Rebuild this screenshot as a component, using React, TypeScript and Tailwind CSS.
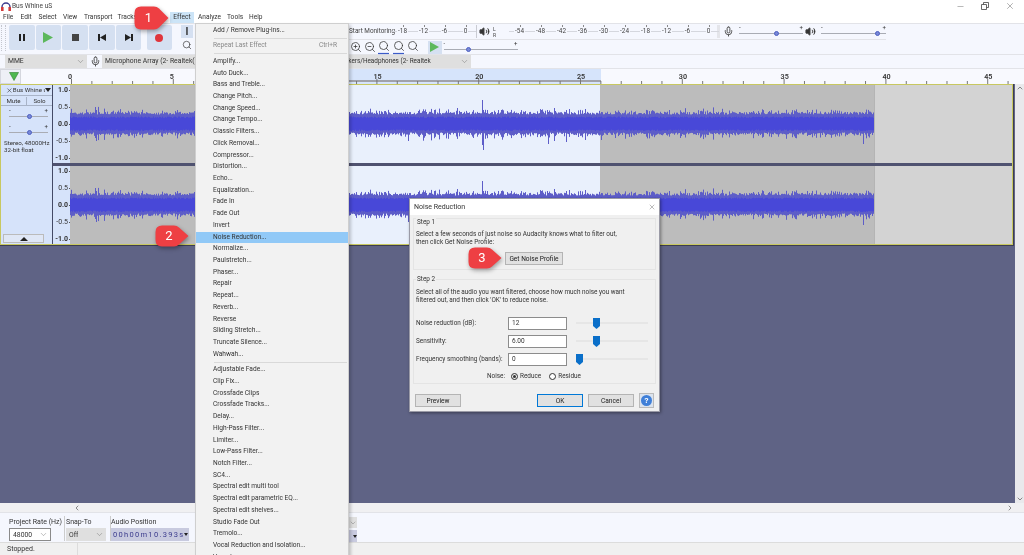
import React from "react";
import { Mic, Volume2, ZoomIn, ZoomOut, Search, Minus, X, ChevronDown, ChevronUp, ChevronLeft, ChevronRight } from "lucide-react";

const MENU: (string | null | { t: string; s: string })[] = [
  "Add / Remove Plug-ins...", null, { t: "Repeat Last Effect", s: "Ctrl+R" }, null,
  "Amplify...", "Auto Duck...", "Bass and Treble...", "Change Pitch...", "Change Speed...", "Change Tempo...", "Classic Filters...", "Click Removal...", "Compressor...", "Distortion...", "Echo...", "Equalization...", "Fade In", "Fade Out", "Invert", "Noise Reduction...", "Normalize...", "Paulstretch...", "Phaser...", "Repair", "Repeat...", "Reverb...", "Reverse", "Sliding Stretch...", "Truncate Silence...", "Wahwah...", null,
  "Adjustable Fade...", "Clip Fix...", "Crossfade Clips", "Crossfade Tracks...", "Delay...", "High-Pass Filter...", "Limiter...", "Low-Pass Filter...", "Notch Filter...", "SC4...", "Spectral edit multi tool", "Spectral edit parametric EQ...", "Spectral edit shelves...", "Studio Fade Out", "Tremolo...", "Vocal Reduction and Isolation...", "Vocoder...",
];

function wavePaths(w: number, c: number) {
  let s = 1234567;
  const r = () => { s = (s * 16807) % 2147483647; return s / 2147483647; };
  let outer = ""; let inner = "";
  const spikes: Record<number, [number, number]> = { 25: [17, 14], 26: [14, 17], 338: [10, 17], 412: [24, 21], 413: [14, 26], 478: [12, 20], 484: [16, 17], 496: [14, 18], 531: [12, 16], 737: [14, 12], 793: [11, 20] };
  for (let x = 0; x < w; x += 1) {
    const k = r();
    const big = k > 0.94 ? 6 * r() : k > 0.65 ? 3.5 * r() : 0;
    const up = spikes[x]?.[0] ?? 9.5 + r() * 2.5 + big;
    const dn = spikes[x]?.[1] ?? 8.5 + r() * 2.5 + big * 1.2;
    outer += `M${x + 0.5} ${(c - up).toFixed(1)}V${(c + dn).toFixed(1)}`;
    const a = 6 + r() * 1.5; const b = 5.5 + r() * 1.5;
    inner += `M${x + 0.5} ${(c - a).toFixed(1)}V${(c + b).toFixed(1)}`;
  }
  return { outer, inner };
}

const Wave = () => {
  const { outer, inner } = wavePaths(804, 39);
  return (
    <svg width="804" height="78" className="absolute left-0 top-0">
      <path d={outer} stroke="#5d5dc8" strokeWidth="1" fill="none" />
      <path d={inner} stroke="#4848d8" strokeWidth="1" fill="none" />
    </svg>
  );
};

const Channel = () => (
  <div className="relative flex h-[78px] w-[942px]">
    <div className="w-[278px] bg-[#bcbcbc]" />
    <div className="w-[252px] bg-[#e9f0fc]" />
    <div className="w-[274px] bg-[#bcbcbc]" />
    <div className="w-[138px] border-l border-[#b4b4b4] bg-[#d3d3d3]" />
    <Wave />
  </div>
);

const Scale = () => (
  <div className="flex h-[78px] w-[17px] flex-col justify-between bg-[#d6e3fa] pt-[1px] text-right text-[7px] leading-[9px] text-[#333]">
    {["1.0", "0.5", "0.0", "-0.5", "-1.0"].map((t, i) => (
      <div key={t} className="flex items-center justify-end">
        <span className={i % 2 === 0 ? "font-bold" : ""}>{t}</span><i className="ml-[1px] h-[1px] w-[1px] bg-[#555]" />
      </div>
    ))}
  </div>
);

const TBtn = ({ children }: { children: React.ReactNode }) => (
  <div className="flex h-[25px] w-[25.5px] items-center justify-center rounded-[2px] bg-[#d5e0f1]">{children}</div>
);

const Slider = ({ w, pos }: { w: number; pos: number }) => (
  <div className="relative h-[13px] shrink-0" style={{ width: w }}>
    <span className="absolute left-0 top-[-2px] text-[6px] leading-[8px] text-[#333]">-</span>
    <span className="absolute right-0 top-[-2px] text-[6px] leading-[8px] text-[#333]">+</span>
    <div className="absolute left-0 right-0 top-[8px] h-[1px] bg-[#a9acb4]" />
    <div className="absolute top-[6px] h-[5px] w-[5px] rounded-full border border-[#4d5fc0] bg-[#7888d8]" style={{ left: pos }} />
  </div>
);

const Combo = ({ w, children, white }: { w: string; children?: React.ReactNode; white?: boolean }) => (
  <div className={`flex h-[13px] shrink-0 ${w} items-center justify-between pl-[3px] pr-[2px] text-[6.8px] text-[#333] ${white ? "border border-[#8a8a8a] bg-white" : "bg-[#dfdfdf]"}`}>
    <span className="truncate whitespace-nowrap">{children}</span>
    <ChevronDown size={9} strokeWidth={1} className="shrink-0 text-[#555]" />
  </div>
);

const Callout = ({ n, w, h, cls }: { n: string; w: number; h: number; cls: string }) => (
  <div className={`absolute ${cls}`} style={{ width: w, height: h }}>
    <svg width={w} height={h} viewBox={`0 0 ${w} ${h}`} className="drop-shadow-[1px_2px_2px_rgba(0,0,0,0.35)]">
      <path d={`M7 0.5H${w - 15}Q${w - 12} 0.5 ${w - 10} 2.5L${w - 0.5} ${h / 2}L${w - 10} ${h - 2.5}Q${w - 12} ${h - 0.5} ${w - 15} ${h - 0.5}H7Q0.5 ${h - 0.5} 0.5 ${h - 7}V7Q0.5 0.5 7 0.5Z`} fill="#ee3f43" />
    </svg>
    <span className="absolute left-0 top-0 text-center text-[13px] text-white" style={{ width: w - 6, lineHeight: `${h}px` }}>{n}</span>
  </div>
);

const VSlider = ({ pos }: { pos: number }) => (
  <div className="relative ml-[9px] h-[2px] w-[72px] bg-[#e6e6e6]">
    <svg width="7" height="11" viewBox="0 0 7 11" className="absolute top-[-4px]" style={{ left: pos }}>
      <path d="M0 0H7V8L3.5 11L0 8Z" fill="#0a6fc9" />
    </svg>
  </div>
);

const DBtn = ({ children, w = "w-[46px]", cls = "border-[#b4b4b4]" }: { children: React.ReactNode; w?: string; cls?: string }) => (
  <div className={`flex h-[13px] ${w} items-center justify-center whitespace-nowrap border bg-[#e1e1e1] text-[6.6px] text-[#222] ${cls}`}>{children}</div>
);

const Field = ({ v }: { v: string }) => (
  <div className="h-[13px] w-[59px] shrink-0 border border-[#8c8c8c] bg-white pl-[3px] text-[6.5px] leading-[11px] text-[#333]">{v}</div>
);

const FitIcon = ({ a }: { a?: boolean }) => (
  <div className="relative mr-[2px] h-[14px] w-[12.5px]">
    <Search size={12} strokeWidth={1.5} />
    {a && <svg width="11" height="3" viewBox="0 0 11 3" className="absolute bottom-[-1px] left-0"><path d="M0 1.5H11" stroke="#3b5bc8" strokeWidth="1.2" /></svg>}
  </div>
);

const MeterLabel = ({ t }: { t: string }) => (
  <span className="relative flex w-[21px] items-center justify-center">
    <i className="absolute left-1/2 top-[1px] h-[2px] w-[1px] bg-[#888]" />
    <i className="h-[1px] flex-1 bg-[#d5d7de]" />
    <span className="px-[1px]">{t}</span>
    <i className="h-[1px] flex-1 bg-[#d5d7de]" />
  </span>
);

export default function App() {
  const rec = ["-18", "-12", "-6", "0"];
  const play = ["-54", "-48", "-42", "-36", "-30", "-24", "-18", "-12", "-6", "0"];
  const ruler = ["0", "5", "10", "15", "20", "25", "30", "35", "40", "45"];
  return (
    <div className="relative flex h-[555px] w-[1024px] flex-col overflow-hidden bg-[#5f6385] font-['Roboto',sans-serif] text-[#333] blur-[0.25px]">
      {/* title + menubar */}
      <div className="h-[12px] shrink-0 bg-white">
        <div className="flex h-[12px] items-center pl-[1px]">
          <svg width="10" height="9" viewBox="0 0 10 9" className="mr-[1px]">
            <path d="M1 7V5a4 4 0 0 1 8 0v2" stroke="#3a3a8c" strokeWidth="1.4" fill="none" />
            <rect x="0" y="5" width="2.6" height="4" fill="#d13a3a" /><rect x="7.4" y="5" width="2.6" height="4" fill="#d13a3a" />
          </svg>
          <span className="text-[6.6px] leading-[12px] text-[#444]">Bus Whine uS</span>
          <div className="ml-auto flex items-center">
            <Minus size={9} strokeWidth={1} className="mr-[16px] text-[#444]" />
            <svg width="8" height="8" viewBox="0 0 8 8" className="mr-[16px]"><path d="M0.5 2.5H5.5V7.5H0.5ZM2.5 2.5V0.5H7.5V5.5H5.5" stroke="#444" fill="none" strokeWidth="0.8" /></svg>
            <X size={10} strokeWidth={1} className="mr-[9px] text-[#444]" />
          </div>
        </div>
      </div>
      <div className="flex h-[11px] shrink-0 items-center bg-white pl-[3px] text-[6.6px] leading-[11px] text-[#333]">
        <span className="w-[17.5px]">File</span><span className="w-[18px]">Edit</span><span className="w-[24.5px]">Select</span><span className="w-[21px]">View</span><span className="w-[33.5px]">Transport</span><span className="w-[52.5px]">Tracks</span>
        <span className="flex h-[11px] w-[24px] items-center justify-center bg-[#cce4f7]">Effect</span>
        <span className="ml-[4px] w-[29px]">Analyze</span><span className="w-[22px]">Tools</span><span>Help</span>
      </div>
      {/* toolbars */}
      <div className="flex h-[31px] shrink-0 border-t border-[#e2e3e8] bg-[#f5f7fe]">
        <div className="flex w-[181px] items-start pt-[1px]">
          <div className="ml-[1px] mr-[3px] h-[26px] w-[5px] border-x border-dotted border-[#c4c6ce]" />
          <div className="flex items-start gap-[1.2px]">
            <TBtn><div className="flex gap-[2px]"><i className="h-[7px] w-[2px] bg-[#222]" /><i className="h-[7px] w-[2px] bg-[#222]" /></div></TBtn>
            <TBtn><svg width="10" height="11" viewBox="0 0 10 11"><path d="M0 0L10 5.5L0 11Z" fill="#5cb85c" /></svg></TBtn>
            <TBtn><i className="h-[7px] w-[7px] bg-[#444]" /></TBtn>
            <TBtn><svg width="8" height="7" viewBox="0 0 8 7"><path d="M0 0H2V7H0ZM8 0V7L2 3.5Z" fill="#222" /></svg></TBtn>
            <TBtn><svg width="8" height="7" viewBox="0 0 8 7"><path d="M8 0H6V7H8ZM0 0V7L6 3.5Z" fill="#222" /></svg></TBtn>
            <div className="w-[3px]" />
            <TBtn><i className="h-[8px] w-[8px] rounded-full bg-[#e0353b]" /></TBtn>
          </div>
        </div>
        <div className="flex w-[12px] flex-col pt-[1px]">
          <div className="flex h-[13px] w-[12px] items-center justify-center bg-[#d5e0f1] text-[10px] font-bold leading-[12px]">I</div>
          <Search size={10} strokeWidth={1.6} className="mt-[2px] ml-[1px]" />
        </div>
        <div className="ml-[156px] flex flex-col">
          <div className="flex h-[15px] items-center text-[6.4px] leading-[15px] text-[#444]">
            <span className="w-[43px] whitespace-nowrap">Start Monitoring</span>
            {rec.map((t, i) => <MeterLabel key={i} t={t} />)}
            <div className="h-[13px] w-[1px] bg-[#c9cbd2]" />
            <Volume2 size={11} fill="#333" className="ml-[2px]" />
            <span className="ml-[3px] w-[8px] text-[5px] leading-[6px]">L<br />R</span>
            <div className="ml-[8px] flex">
              {play.map((t, i) => <MeterLabel key={i} t={t} />)}
            </div>
            <div className="ml-[-2px] h-[13px] w-[3px] bg-[#e4e5ea]" />
            <Mic size={11} className="ml-[3px] mr-[5px]" />
            <Slider w={64} pos={35} />
            <Volume2 size={11} fill="#333" className="ml-[2px] mr-[5px]" />
            <Slider w={65} pos={54} />
          </div>
          <div className="flex h-[15px] items-center border-t border-[#e2e3e8] text-[#333]">
            <ZoomIn size={12} strokeWidth={1.5} className="ml-[1px] mr-[2px]" />
            <ZoomOut size={12} strokeWidth={1.5} className="mr-[2px]" />
            <FitIcon a />
            <FitIcon a />
            <FitIcon />
            <div className="ml-[6px] flex h-[13px] w-[14px] items-center justify-center bg-[#d5e0f1]"><svg width="9" height="10" viewBox="0 0 9 10"><path d="M0 0L9 5L0 10Z" fill="#5cb85c" /></svg></div>
            <div className="ml-[2px]"><Slider w={74} pos={22} /></div>
          </div>
        </div>
      </div>
      {/* device row */}
      <div className="flex h-[15px] shrink-0 items-center border-y border-[#e2e3e8] bg-[#f5f7fe]">
        <div className="ml-[5px]"><Combo w="w-[82px]">MME</Combo></div>
        <Mic size={11} className="ml-[3px] mr-[1px] text-[#444]" />
        <Combo w="w-[150px]">Microphone Array (2- Realtek(R)</Combo>
        <div className="ml-[79px]"><Combo w="w-[140px]"><span className="text-[6.4px]">Speakers/Headphones (2- Realtek</span></Combo></div>
      </div>
      {/* ruler */}
      <div className="relative flex h-[15px] shrink-0 bg-[#f8f9fe]">
        <div className="flex h-[15px] w-[21px] shrink-0 items-start justify-end border border-[#d5d7de] bg-[#eef0f6] pr-[1px] pt-[2px]"><svg width="10" height="9" viewBox="0 0 10 9"><path d="M0.5 0.5H9.5L5 8.5Z" fill="#4fb84f" stroke="#2e7f2e" strokeWidth="0.6" /></svg></div>
        <div className="w-[50px] shrink-0" />
        <div className="absolute left-[300px] top-0 h-[15px] w-[301px] bg-[#d6e4fb]" />
        <div className="absolute bottom-[2px] left-[300px] h-[2px] w-[301px] bg-[#a0a2aa]" />
        <div className="relative flex">
          {ruler.map((t) => <span key={t} className="w-[101.8px] shrink-0 pt-[3px] text-[7.2px] font-semibold leading-[9px] text-[#333]"><span className="ml-[-3px]">{t}</span></span>)}
        </div>
        <svg width="953" height="5" className="absolute bottom-0 left-[71px]">
          {Array.from({ length: 47 }).map((_, i) => <rect key={i} x={i * 20.36} y={i % 5 === 0 ? 0 : 2} width="1" height={i % 5 === 0 ? 5 : 3} fill="#777" />)}
        </svg>
      </div>
      {/* tracks + vertical scrollbar */}
      <div className="flex min-h-0 flex-1">
        <div className="w-[1015px] shrink-0">
          <div className="flex h-[161px] w-[1013px] overflow-hidden border border-[#c8c860] bg-[#30304a] shadow-[0_0_0_1px_#3d3d52]">
            <div className="flex w-[52px] shrink-0 flex-col border-r border-[#444a66] bg-[#d6e3fa] text-[6.2px] leading-[8px] text-[#333]">
              <div className="flex h-[11px] items-center border-b border-[#a9b4c8] pl-[5px]">
                <X size={7} strokeWidth={2} /><span className="w-[33px] overflow-hidden whitespace-nowrap">Bus Whine uS</span><i className="ml-auto mr-[1px] h-0 w-0 border-x-[3px] border-t-[4px] border-x-transparent border-t-[#222]" />
              </div>
              <div className="flex h-[10px] items-center border-b border-[#a9b4c8] text-center"><span className="w-[26px] border-r border-[#a9b4c8]">Mute</span><span className="w-[25px]">Solo</span></div>
              <div className="px-[8px] pt-[2px]"><Slider w={39} pos={18} /></div>
              <div className="mt-[3px] px-[8px]"><Slider w={39} pos={18} /></div>
              <div className="mt-[3px] whitespace-nowrap pl-[3px] leading-[6.5px]">Stereo, 48000Hz<br />32-bit float</div>
              <div className="mb-[1px] ml-[2px] mt-auto flex h-[9px] w-[41px] items-center justify-center border border-[#bbb] bg-[#dfe7f6]"><i className="h-0 w-0 border-x-[4px] border-b-[4px] border-x-transparent border-b-[#222]" /></div>
            </div>
            <div className="flex flex-col">
              <div className="flex"><Scale /><Channel /></div>
              <div className="h-[3px] w-[959px] shrink-0 bg-[#4f5270]" />
              <div className="flex"><Scale /><Channel /></div>
            </div>
          </div>
        </div>
        <div className="flex w-[9px] flex-col items-center justify-between bg-[#e9e9ec]">
          <ChevronUp size={8} className="text-[#555]" />
          <ChevronDown size={8} className="text-[#555]" />
        </div>
      </div>
      {/* h scrollbar */}
      <div className="flex h-[9px] shrink-0 items-center justify-between bg-[#f0f0f2]"><div className="flex h-[9px] w-[82px] items-center justify-end pr-[1px]"><ChevronLeft size={8} className="text-[#555]" /></div><ChevronRight size={8} className="mr-[10px] text-[#555]" /></div>
      {/* selection bar */}
      <div className="relative flex h-[30px] shrink-0 items-start border-t border-[#e2e3e8] bg-[#f5f7fe] pl-[9px] pt-[3px] text-[7px] leading-[12px] text-[#333]">
        <div className="w-[55px]"><div className="whitespace-nowrap">Project Rate (Hz)</div><Combo w="w-[42px]" white>48000</Combo></div>
        <div className="w-[46px] border-l border-[#ccc] pl-[1px]"><div>Snap-To</div><Combo w="w-[40px]">Off</Combo></div>
        <div className="border-l border-[#ccc]">
          <div>Audio Position</div>
          <div className="flex h-[13px] w-[78px] items-center justify-between bg-[#c8cadf] pl-[2px] pr-[1px] text-[7.5px] tracking-[1.3px] text-[#3a3a8c]">00h00m10.393s<i className="h-0 w-0 border-x-[2px] border-t-[3px] border-x-transparent border-t-[#222]" /></div>
        </div>
        <div className="absolute left-[349px] top-[4px] flex h-[11px] w-[8px] items-center bg-[#dfdfdf]"><ChevronDown size={8} strokeWidth={1} className="text-[#555]" /></div>
        <div className="absolute left-[349px] top-[17px] flex h-[12px] w-[8px] items-center justify-end bg-[#c8cadf]"><i className="h-0 w-0 border-x-[2px] border-t-[3px] border-x-transparent border-t-[#222]" /></div>
      </div>
      {/* status */}
      <div className="flex h-[13px] shrink-0 items-center border-t border-[#dcdcdc] bg-[#f0f0f0] text-[7px] text-[#333]"><span className="w-[78px] border-r border-[#dcdcdc] pl-[7px] leading-[12px]">Stopped.</span></div>

      {/* Effect menu overlay */}
      <div className="absolute left-[195px] top-[23px] h-[540px] w-[154px] overflow-hidden border border-[#cfcfcf] bg-[#f2f2f2] pt-[1px] text-[6.6px] leading-[11.73px] text-[#333] shadow-[2px_2px_3px_rgba(0,0,0,0.2)]">
        {MENU.map((m, i) => {
          if (m === null) return <div key={i} className="mx-[1px] flex h-[3.7px] items-center"><div className="ml-[17px] h-[1px] w-full bg-[#d9d9d9]" /></div>;
          if (typeof m === "object") return <div key={i} className="flex h-[11.73px] justify-between pl-[17px] pr-[11px] text-[#888]"><span>{m.t}</span><span>{m.s}</span></div>;
          return <div key={i} className={`h-[11.73px] pl-[17px] ${m === "Noise Reduction..." ? "bg-[#91c9f7]" : ""}`}>{m}</div>;
        })}
      </div>

      {/* Dialog overlay */}
      <div className="absolute left-[409px] top-[198px] flex h-[214px] w-[251px] flex-col whitespace-nowrap border border-[#9a9aa6] bg-[#f0f0f0] text-[6.4px] leading-[8px] text-[#333] shadow-[1px_1px_3px_rgba(0,0,0,0.4)]">
        <div className="flex h-[16px] shrink-0 items-center justify-between bg-white pl-[4px] pr-[3px] text-[7px]"><span>Noise Reduction</span><X size={8} strokeWidth={1} /></div>
        <div className="mx-[3px] mt-[3px] h-[52px] shrink-0 border border-[#e4e4e4]">
          <div className="mt-[-1px] ml-[2px] w-fit bg-[#f0f0f0] px-[1px]">Step 1</div>
          <div className="ml-[2px] mt-[4px]">Select a few seconds of just noise so Audacity knows what to filter out,<br />then click Get Noise Profile:</div>
          <div className="mt-[6px] flex justify-end pr-[92px]"><DBtn w="w-[58px]">Get Noise Profile</DBtn></div>
        </div>
        <div className="mx-[3px] mt-[9px] h-[105px] shrink-0 border border-[#e4e4e4]">
          <div className="mt-[-5px] ml-[2px] w-fit bg-[#f0f0f0] px-[1px]">Step 2</div>
          <div className="ml-[2px] mt-[4.5px]">Select all of the audio you want filtered, choose how much noise you want<br />filtered out, and then click 'OK' to reduce noise.</div>
          <div className="ml-[2px] mt-[13px] flex flex-col gap-[5px]">
            <div className="flex items-center"><span className="w-[92px]">Noise reduction (dB):</span><Field v="12" /><VSlider pos={17} /></div>
            <div className="flex items-center"><span className="w-[92px]">Sensitivity:</span><Field v="6.00" /><VSlider pos={17} /></div>
            <div className="flex items-center"><span className="w-[92px]">Frequency smoothing (bands):</span><Field v="0" /><VSlider pos={0} /></div>
          </div>
          <div className="mt-[6.7px] flex items-center pl-[73px]">
            <span className="mr-[6px]">Noise:</span>
            <i className="mr-[2px] flex h-[7px] w-[7px] items-center justify-center rounded-full border border-[#333]"><i className="h-[3px] w-[3px] rounded-full bg-[#333]" /></i>
            <span className="mr-[8px]">Reduce</span>
            <i className="mr-[2px] h-[7px] w-[7px] rounded-full border border-[#333] bg-white" />
            <span>Residue</span>
          </div>
        </div>
        <div className="mt-[9px] flex shrink-0 items-center pl-[5px]">
          <DBtn>Preview</DBtn>
          <div className="ml-[76px]"><DBtn cls="border-[#0078d7]">OK</DBtn></div>
          <div className="ml-[5px]"><DBtn>Cancel</DBtn></div>
          <div className="ml-[5px] flex h-[15px] w-[15px] items-center justify-center border border-[#bbb] bg-[#dbe3ee]"><span className="flex h-[11px] w-[11px] items-center justify-center rounded-full bg-[#3f7fd8] text-[8px] font-bold text-white">?</span></div>
        </div>
      </div>

      <Callout n="1" w={35} h={24} cls="left-[134px] top-[6px]" />
      <Callout n="2" w={34} h={22} cls="left-[155px] top-[225px]" />
      <Callout n="3" w={34} h={22} cls="left-[468px] top-[247px]" />
    </div>
  );
}
